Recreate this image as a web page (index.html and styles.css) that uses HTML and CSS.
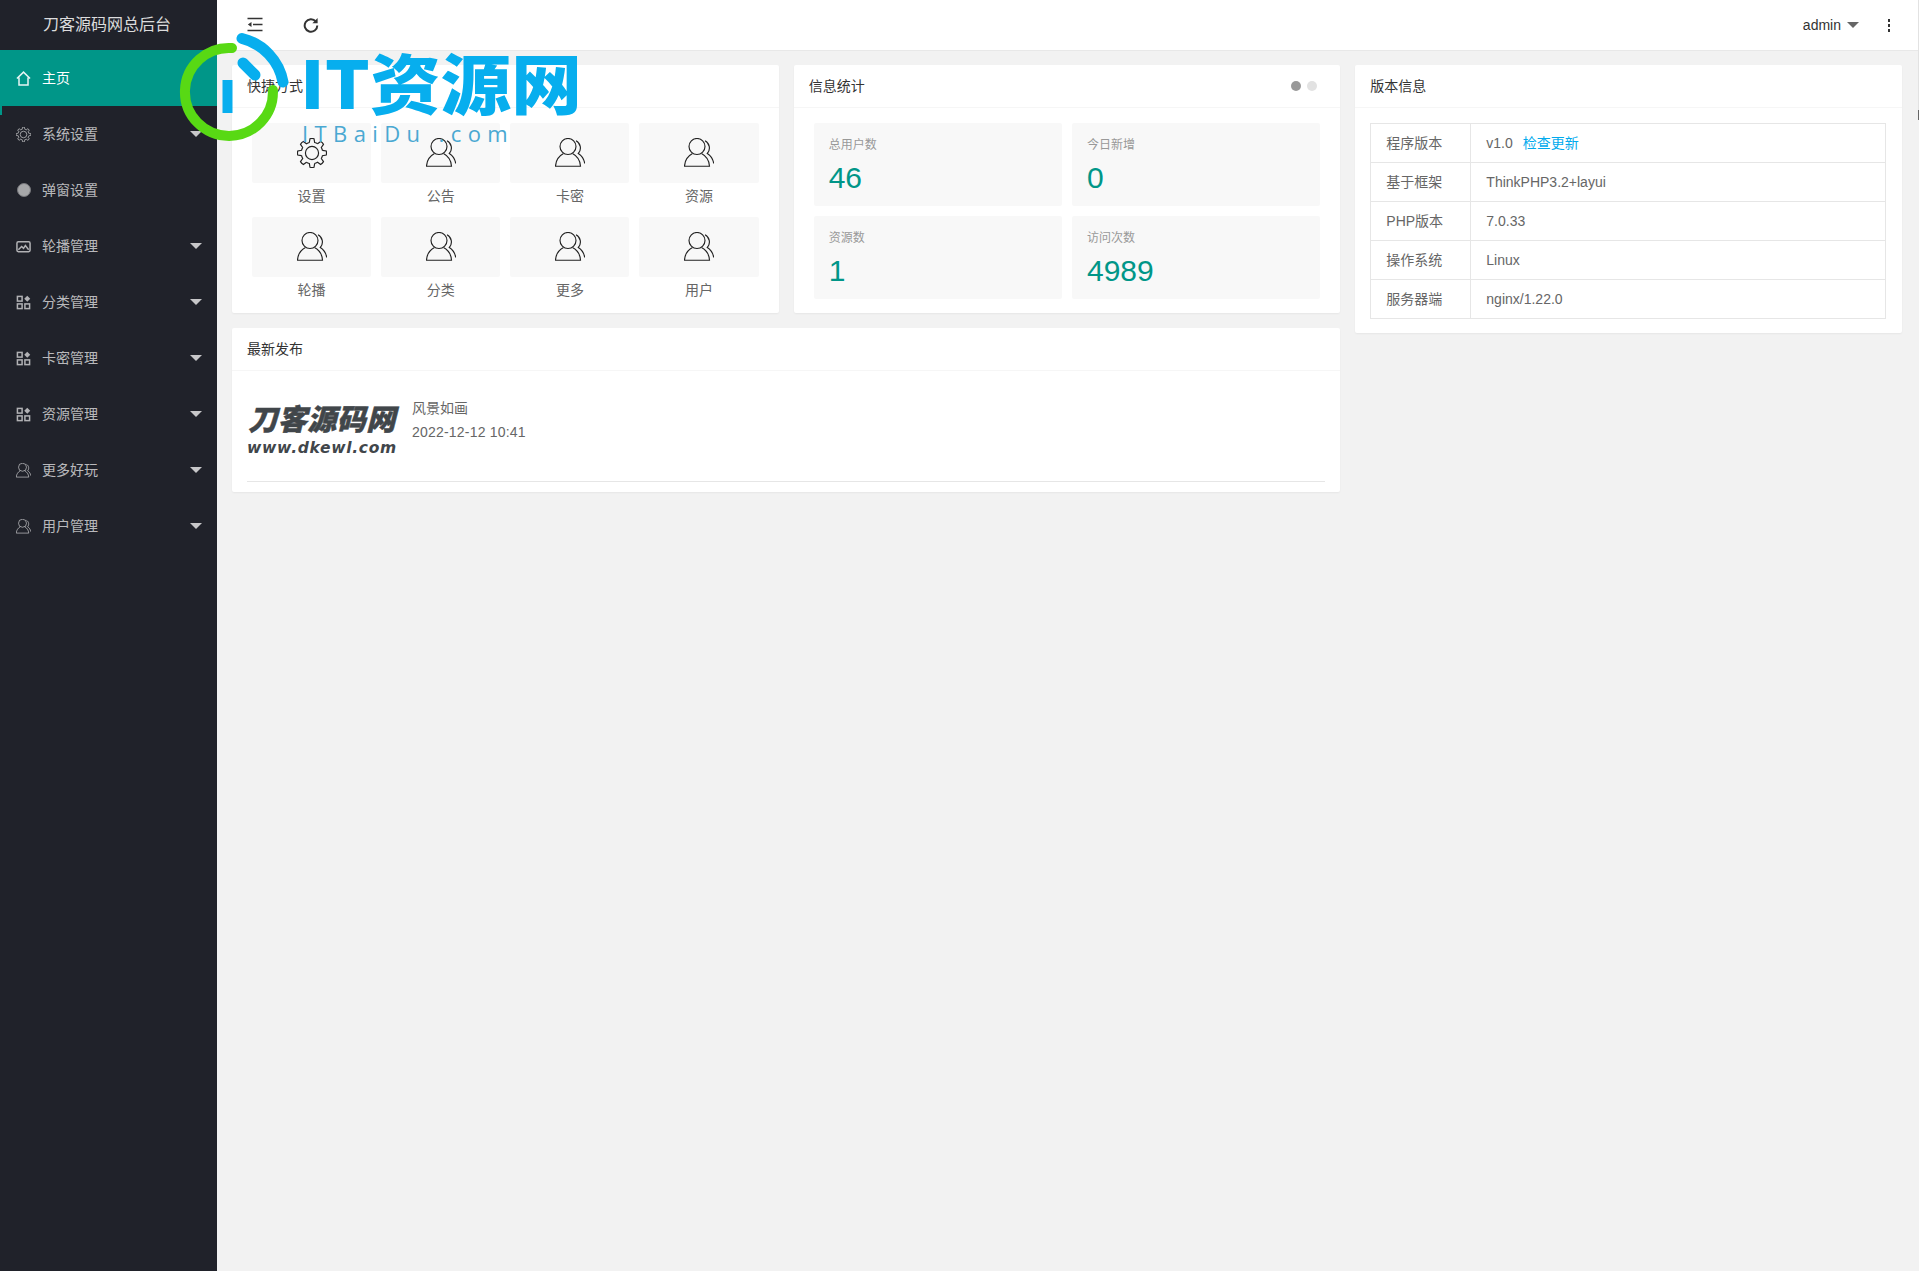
FILE: index.html
```html
<!DOCTYPE html>
<html lang="zh-CN">
<head>
<meta charset="utf-8">
<title>刀客源码网总后台</title>
<link rel="stylesheet" href="styles.css">
</head>
<body>
<svg class="defs" width="0" height="0" aria-hidden="true">
  <symbol id="i-user" viewBox="0 0 30 30">
    <circle cx="13" cy="8.500" r="8"/>
    <path d="M8.500 15.500C4.200 17.800 .8 22.600.5 28.200H25.500C25.200 22.600 21.800 17.800 17.500 15.500"/>
    <path d="M21 2.800C25.500 5 27 11.500 23.300 15.500 26.500 17.500 29 21 29.700 25.500"/>
  </symbol>
  <symbol id="i-gear" viewBox="-14.6 -14.6 29.2 29.2">
    <g id="gear-seg"><path d="M-2.6-10.2-1.95-13.86Q0-14.4 1.95-13.86L2.6-10.2A10.5 10.5 0 0 1 5.56-8.9"/></g>
    <use href="#gear-seg" transform="rotate(45)"/>
    <use href="#gear-seg" transform="rotate(90)"/>
    <use href="#gear-seg" transform="rotate(135)"/>
    <use href="#gear-seg" transform="rotate(180)"/>
    <use href="#gear-seg" transform="rotate(225)"/>
    <use href="#gear-seg" transform="rotate(270)"/>
    <use href="#gear-seg" transform="rotate(315)"/>
    <circle r="6.400"/>
  </symbol>
  <symbol id="i-home" viewBox="0 0 16 16">
    <path d="M1 8 8 1.200 15 8M3.200 6.800V14.800H12.800V6.800"/>
  </symbol>
  <symbol id="i-pic" viewBox="0 0 16 16">
    <rect x="1" y="3" width="14" height="10.500" rx="1.500"/>
    <path d="M2.500 11.500 6 8l2 2 2-3 3.500 4.500"/>
  </symbol>
  <symbol id="i-app" viewBox="0 0 16 16">
    <rect x="1.500" y="1.500" width="5" height="5"/>
    <rect x="1.500" y="9.500" width="5" height="5"/>
    <rect x="9.500" y="9.500" width="5" height="5"/>
    <path class="fill" d="M12 .8 15.200 4 12 7.200 8.800 4Z"/>
  </symbol>
</svg>

<aside class="side">
  <div class="brand">刀客源码网总后台</div>
  <ul class="menu">
    <li class="menu-item active"><svg class="mi"><use href="#i-home"/></svg><span>主页</span></li>
    <li class="menu-item"><svg class="mi"><use href="#i-gear"/></svg><span>系统设置</span><i class="caret"></i></li>
    <li class="menu-item"><span class="dot"></span><span>弹窗设置</span></li>
    <li class="menu-item"><svg class="mi"><use href="#i-pic"/></svg><span>轮播管理</span><i class="caret"></i></li>
    <li class="menu-item"><svg class="mi"><use href="#i-app"/></svg><span>分类管理</span><i class="caret"></i></li>
    <li class="menu-item"><svg class="mi"><use href="#i-app"/></svg><span>卡密管理</span><i class="caret"></i></li>
    <li class="menu-item"><svg class="mi"><use href="#i-app"/></svg><span>资源管理</span><i class="caret"></i></li>
    <li class="menu-item"><svg class="mi"><use href="#i-user"/></svg><span>更多好玩</span><i class="caret"></i></li>
    <li class="menu-item"><svg class="mi"><use href="#i-user"/></svg><span>用户管理</span><i class="caret"></i></li>
  </ul>
</aside>

<div class="main">
  <header class="top">
    <svg class="tool" viewBox="0 0 16 16">
      <path d="M.5 1.500H15.500M6 7.500H15.500M.5 13.500H15.500"/>
      <path class="fill" d="M.8 7.500 4.500 5V10Z"/>
    </svg>
    <svg class="tool refresh" viewBox="0 0 16 16">
      <path d="M12.800 4.400A6.300 6.300 0 1 0 14.300 8.500"/>
      <path class="fill" d="M14.600 1V6.200H9.400Z"/>
    </svg>
    <div class="user">admin<i class="caret dark"></i></div>
    <div class="more"><b></b><b></b><b></b></div>
  </header>

  <main class="content">
    <section class="card">
      <h2 class="card-head">快捷方式</h2>
      <div class="shortcuts">
        <a class="sc"><span class="sc-box"><svg class="sc-icon"><use href="#i-gear"/></svg></span><cite>设置</cite></a>
        <a class="sc"><span class="sc-box"><svg class="sc-icon"><use href="#i-user"/></svg></span><cite>公告</cite></a>
        <a class="sc"><span class="sc-box"><svg class="sc-icon"><use href="#i-user"/></svg></span><cite>卡密</cite></a>
        <a class="sc"><span class="sc-box"><svg class="sc-icon"><use href="#i-user"/></svg></span><cite>资源</cite></a>
        <a class="sc"><span class="sc-box"><svg class="sc-icon"><use href="#i-user"/></svg></span><cite>轮播</cite></a>
        <a class="sc"><span class="sc-box"><svg class="sc-icon"><use href="#i-user"/></svg></span><cite>分类</cite></a>
        <a class="sc"><span class="sc-box"><svg class="sc-icon"><use href="#i-user"/></svg></span><cite>更多</cite></a>
        <a class="sc"><span class="sc-box"><svg class="sc-icon"><use href="#i-user"/></svg></span><cite>用户</cite></a>
      </div>
    </section>

    <section class="card">
      <h2 class="card-head">信息统计<span class="pager"><i class="on"></i><i></i></span></h2>
      <div class="stats">
        <div class="stat"><h3>总用户数</h3><p>46</p></div>
        <div class="stat"><h3>今日新增</h3><p>0</p></div>
        <div class="stat"><h3>资源数</h3><p>1</p></div>
        <div class="stat"><h3>访问次数</h3><p>4989</p></div>
      </div>
    </section>

    <section class="card version">
      <h2 class="card-head">版本信息</h2>
      <div class="version-body">
        <table class="info">
          <tr><td>程序版本</td><td>v1.0 <a class="link">检查更新</a></td></tr>
          <tr><td>基于框架</td><td>ThinkPHP3.2+layui</td></tr>
          <tr><td>PHP版本</td><td>7.0.33</td></tr>
          <tr><td>操作系统</td><td>Linux</td></tr>
          <tr><td>服务器端</td><td>nginx/1.22.0</td></tr>
        </table>
      </div>
    </section>

    <section class="card latest">
      <h2 class="card-head">最新发布</h2>
      <div class="latest-body">
        <div class="post">
          <div class="thumb"><strong>刀客源码网</strong><em>www.dkewl.com</em></div>
          <div class="post-text"><div>风景如画</div><div class="date">2022-12-12 10:41</div></div>
        </div>
      </div>
    </section>
  </main>
</div>

<i class="nav-bar"></i>
<div class="scrollmark"></div>

<div class="watermark">
  <svg class="wm-mark" viewBox="0 0 120 120">
    <path class="wm-green" d="M57 18A44 44 0 1 0 97.900 60"/>
    <path class="wm-blue" d="M67 8.500A55 55 0 0 1 108 52"/>
    <path class="wm-blue" d="M68 33 80 45"/>
    <path class="wm-bar" d="M52.500 50V83"/>
  </svg>
  <div class="wm-title">IT资源网</div>
  <div class="wm-sub">ITBaiDu .com</div>
</div>
</body>
</html>
```

FILE: styles.css
```css
* { box-sizing: border-box; }
html, body { margin: 0; padding: 0; }
body {
  display: flex;
  min-height: 100vh;
  overflow: hidden;
  background: #f2f2f2;
  color: #666;
  font: 14px/20px "Liberation Sans", "Noto Sans CJK SC", sans-serif;
}
.defs { position: absolute; }
symbol, svg { fill: none; stroke: currentColor; }
ul { list-style: none; margin: 0; padding: 0; }
h2, h3, p { margin: 0; font-weight: 400; }
cite, em, i { font-style: normal; }

/* sidebar */
.side { width: 217px; flex: none; background: #20222a; color: rgba(255,255,255,.7); }
.brand { height: 50px; line-height: 50px; padding-right: 3px; text-align: center; font-size: 16px; color: rgba(255,255,255,.85); }
.menu-item { height: 56px; display: flex; align-items: center; padding: 0 15px 0 16px; gap: 11px; }
.menu-item.active { background: #009688; color: #fff; }
.mi { width: 15px; height: 15px; flex: none; stroke-width: 1.6; color: rgba(255,255,255,.65); }
.active .mi { color: rgba(255,255,255,.9); }
.dot { width: 14px; height: 14px; margin: 0 .5px; flex: none; border-radius: 50%; background: #a6a7a9; border: 1px solid #77787c; }
.caret { margin-left: auto; width: 0; height: 0; border: 6px solid transparent; border-bottom: 0; border-top: 6px solid rgba(255,255,255,.75); }
.nav-bar { position: absolute; left: 0; top: 106px; width: 2px; height: 9px; background: #009688; }
.scrollmark { position: absolute; right: 0; top: 0; width: 1px; height: 120px; background: linear-gradient(#e2e2e2 0 92%, #666 92%); }

/* main column */
.main { flex: 1; min-width: 0; }
.top { height: 51px; padding: 0 0 0 30px; display: flex; align-items: center; background: #fff; border-bottom: 1px solid #e8e8e8; color: #333; }
.tool { width: 16px; height: 16px; stroke-width: 1.7; }
.refresh { margin-left: 40px; stroke-width: 2; }
.fill { fill: currentColor; stroke: none; }
.user { margin-left: auto; display: flex; align-items: center; gap: 6px; }
.caret.dark { margin: 0; border-top-color: #666; }
.more { width: 60px; display: flex; flex-direction: column; align-items: center; gap: 2px; }
.more b { width: 2px; height: 3px; background: #333; }

.content { padding: 14px 17px 0 15px; display: grid; grid-template-columns: repeat(3, 1fr); gap: 15px; align-items: start; }
.card { background: #fff; border-radius: 2px; box-shadow: 0 1px 2px rgba(0,0,0,.05); }
.card-head { height: 43px; line-height: 42px; padding: 0 15px; font-size: 14px; color: #333; border-bottom: 1px solid #f6f6f6; display: flex; justify-content: space-between; align-items: center; }
.version { grid-column: 3; grid-row: 1 / span 2; }
.latest { grid-column: 1 / span 2; }

/* shortcuts */
.shortcuts { height: 205px; padding: 15px 20px 0; display: grid; grid-template-columns: repeat(4, 1fr); column-gap: 10px; grid-auto-rows: 94px; }
.sc { display: flex; flex-direction: column; align-items: center; }
.sc-box { width: 100%; height: 60px; background: #f8f8f8; border-radius: 2px; display: flex; justify-content: center; align-items: center; }
.sc-icon { width: 30px; height: 30px; color: #222; stroke-width: 1.15; }
.sc cite { margin-top: 3px; line-height: 20px; color: #666; }

/* stats */
.pager { display: flex; gap: 6px; padding-right: 8px; }
.pager i { width: 10px; height: 10px; border-radius: 50%; background: #e2e2e2; }
.pager i.on { background: #999; }
.stats { padding: 15px 20px 0; height: 205px; display: grid; grid-template-columns: 1fr 1fr; gap: 10px; grid-auto-rows: 83px; }
.stat { background: #f8f8f8; border-radius: 2px; padding: 12px 15px; }
.stat h3 { font-size: 12px; line-height: 20px; color: #999; }
.stat p { font-size: 30px; line-height: 36px; margin-top: 5px; color: #009688; }

/* version */
.version-body { padding: 15px 16px 14px 15px; }
.info { width: 100%; border-collapse: collapse; }
.info td { border: 1px solid #e6e6e6; padding: 9px 15px; line-height: 20px; height: 39px; }
.info td:first-child { width: 100px; }
.link { color: #01AAED; margin-left: 6px; }

/* latest */
.latest-body { padding: 15px 15px 10px; }
.post { display: flex; gap: 15px; align-items: flex-start; height: 96px; padding-top: 10px; border-bottom: 1px solid #e6e6e6; }
.thumb { width: 150px; margin-top: 3px; color: #41464a; display: flex; flex-direction: column; align-items: center; }
.thumb strong { font: italic 900 29px/36px "Noto Sans CJK SC", sans-serif; letter-spacing: .5px; white-space: nowrap; -webkit-text-stroke: .5px #41464a; }
.thumb em { font: italic 700 15.5px/26px "DejaVu Sans", sans-serif; letter-spacing: .7px; white-space: nowrap; }
.post-text div { line-height: 24px; }
.post-text .date { letter-spacing: .2px; }

/* overlay logo */
.watermark { position: absolute; left: 0; top: 0; width: 0; height: 0; pointer-events: none; }
.wm-mark { position: absolute; left: 175px; top: 30px; width: 120px; height: 120px; stroke-linecap: round; }
.wm-green { stroke: #58d914; stroke-width: 10; }
.wm-blue { stroke: #07aeee; stroke-width: 11; }
.wm-bar { stroke: #07aeee; stroke-width: 10; stroke-linecap: butt; }
.wm-title { position: absolute; left: 300px; top: 36px; font: 900 66px/88px "Noto Sans CJK SC", sans-serif; color: #07aeee; white-space: nowrap; transform: scaleX(1.07); transform-origin: left center; }
.wm-sub { position: absolute; left: 302px; top: 118px; font: 400 22px/30px "Open Sans", sans-serif; color: #4aa8d2; letter-spacing: 6.4px; white-space: nowrap; }
```
